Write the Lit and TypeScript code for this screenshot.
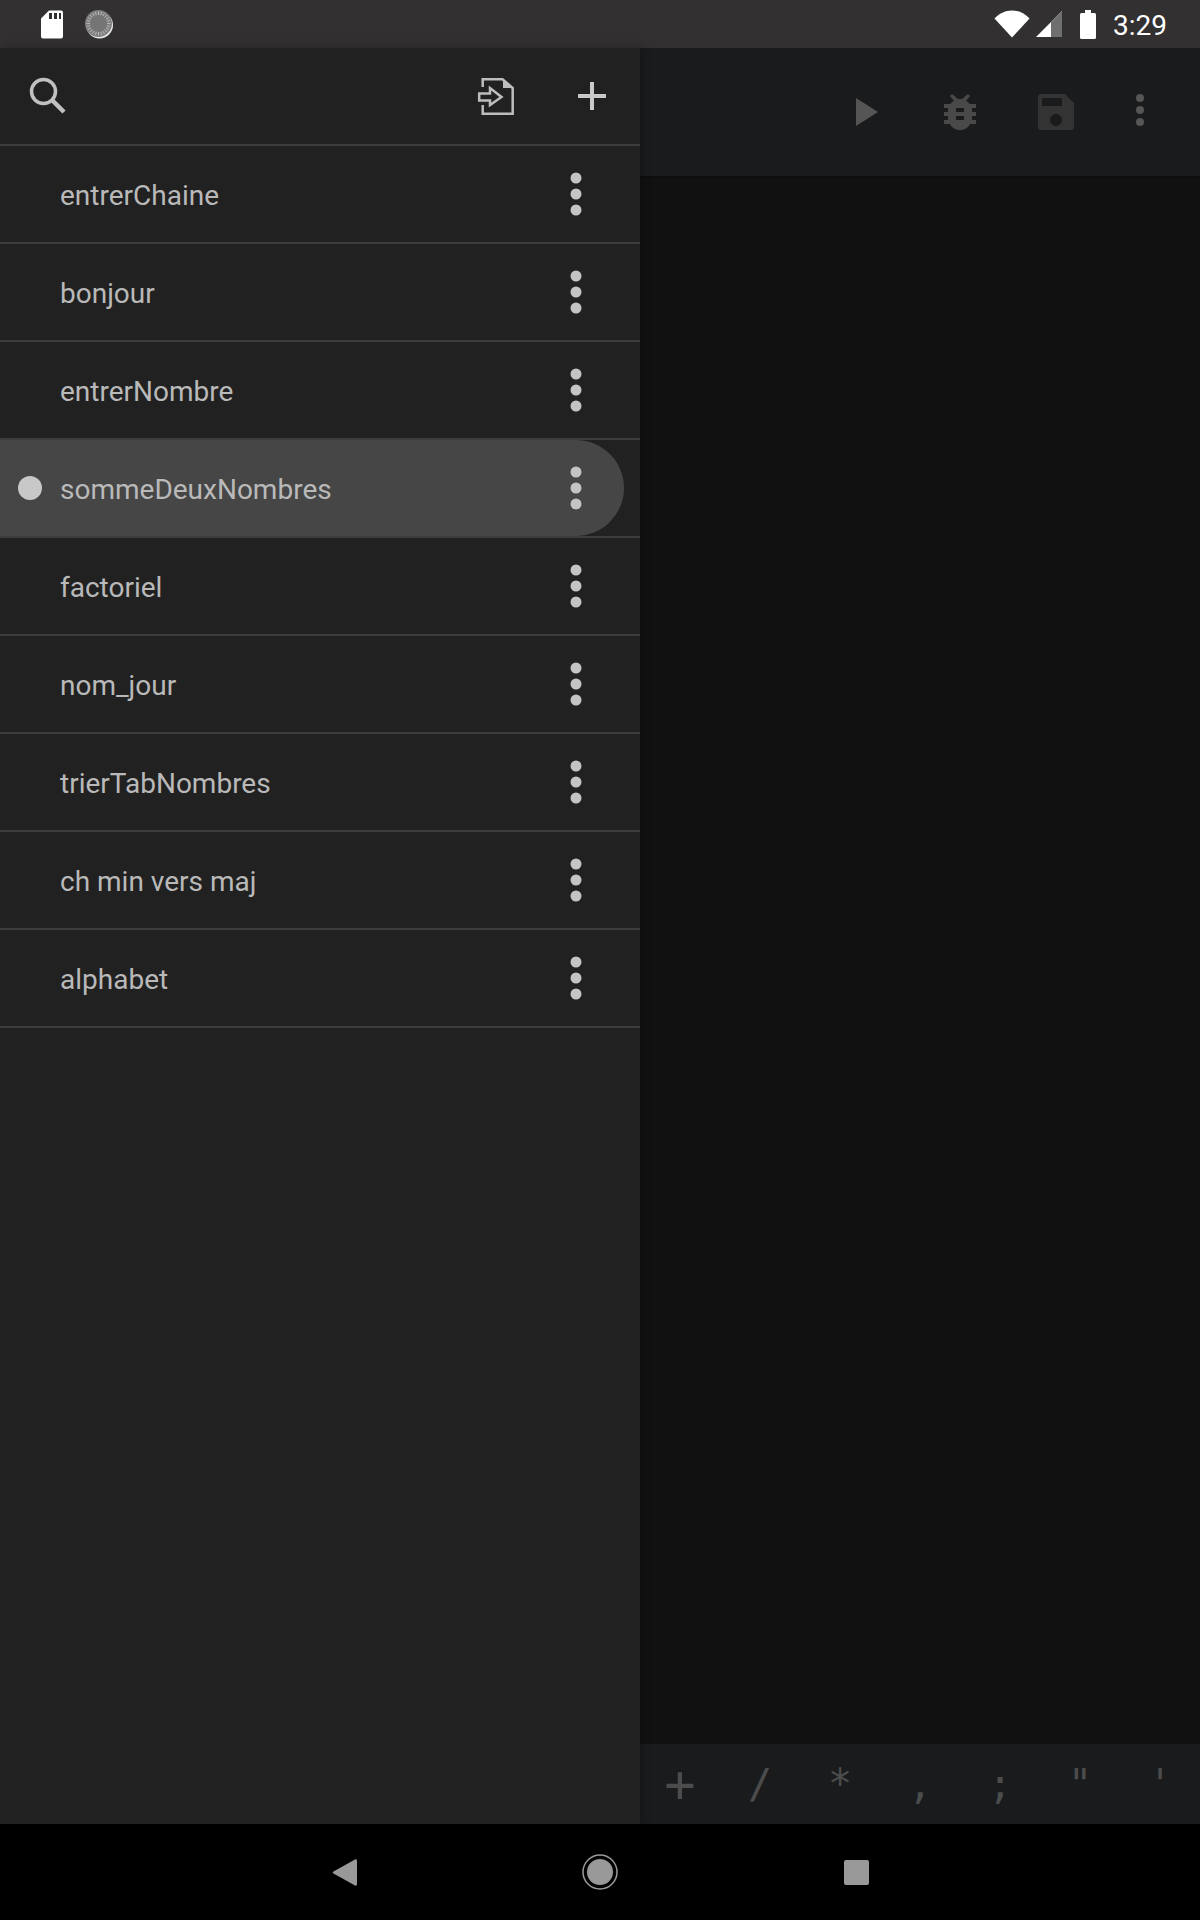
import { LitElement, html, css, svg } from "lit";
import { customElement } from "lit/decorators.js";

const NAMES = ["entrerChaine","bonjour","entrerNombre","sommeDeuxNombres","factoriel","nom_jour","trierTabNombres","ch min vers maj","alphabet"];
const KEYS = ["+","/","*",",",";","\"","'"];

const kebab = html`<svg class="kebab" width="12" height="44" viewBox="0 0 12 44"><circle cx="6" cy="6" r="5.5"/><circle cx="6" cy="22" r="5.5"/><circle cx="6" cy="38" r="5.5"/></svg>`;

const ticks = Array.from({ length: 24 }, (_, i) => {
  const a = (i * Math.PI) / 12;
  return svg`<line x1=${13.5 + Math.cos(a) * 8.5} y1=${13.5 + Math.sin(a) * 8.5} x2=${13.5 + Math.cos(a) * 12} y2=${13.5 + Math.sin(a) * 12} stroke="#b4b4b4" stroke-width="1"/>`;
});

@customElement("app-root")
export class AppRoot extends LitElement {
  static styles = css`
    :host { display: flex; flex-direction: column; width: 1200px; height: 1920px; font-family: Roboto, sans-serif; background: #000; overflow: hidden; }
    .status { height: 48px; flex: none; background: #323031; display: flex; align-items: center; padding: 0 33px 0 40px; box-sizing: border-box; }
    .status .sp { flex: 1; }
    .status svg { display: block; flex: none; }
    .spin { margin-left: 21px; }
    .sig { margin-left: 6px; }
    .bat { margin-left: 18px; }
    .time { color: #fff; font-size: 28px; margin: 3px 0 0 17px; line-height: 45px; }
    .body { flex: 1; display: flex; min-height: 0; }
    .drawer { width: 640px; flex: none; background: #212121; display: flex; flex-direction: column; position: relative; z-index: 1; box-shadow: 2px 0 10px rgba(0,0,0,.25); }
    .dbar { height: 96px; flex: none; display: flex; align-items: center; padding: 0 34px 0 28px; box-sizing: border-box; }
    .dbar .sp { flex: 1; }
    .dbar svg { display: block; flex: none; }
    .imp { margin-right: 64px; }
    .row { height: 98px; box-sizing: border-box; border-top: 2px solid #3d3d3d; display: flex; align-items: center; position: relative; }
    .row.last { height: 100px; border-bottom: 2px solid #3d3d3d; }
    .row .hl { position: absolute; left: 0; top: 0; right: 16px; bottom: 0; background: #464646; border-radius: 0 48px 48px 0; }
    .row .dot { position: absolute; left: 18px; top: 36px; width: 24px; height: 24px; border-radius: 50%; background: #c8c8c8; }
    .name { position: relative; flex: 1; padding: 4px 0 0 60px; font-size: 28px; color: #b9b9b9; line-height: 92px; }
    .kebab { position: relative; display: block; margin-right: 58px; fill: #c4c4c4; }
    .main { flex: 1; background: #111111; display: flex; flex-direction: column; }
    .mbar { height: 128px; flex: none; background: #1a1b1d; position: relative; display: flex; align-items: flex-start; padding-top: 46px; box-sizing: border-box; box-shadow: 0 1px 2px rgba(0,0,0,.3); }
    .mbar svg { display: block; flex: none; }
    .m-play { margin-left: 216px; margin-top: 4px; }
    .m-bug { margin-left: 66px; }
    .m-save { margin-left: 62px; }
    .m-keb { margin-left: 62px; }
    .fill { flex: 1; }
    .keys { height: 80px; flex: none; background: #1a1b1d; display: flex; }
    .key { width: 80px; text-align: center; color: #4c4c4c; font-size: 40px; line-height: 80px; font-family: "DejaVu Sans Mono", monospace; }
    .key.big { font-size: 52px; }
    .nav { height: 96px; flex: none; background: #000; display: flex; justify-content: center; align-items: center; }
    .nav svg { display: block; }
  `;

  render() {
    return html`
      <div class="status">
        <svg width="24" height="29" viewBox="0 0 24 29"><path fill="#fff" fill-rule="evenodd" d="M9 .5h12a2 2 0 0 1 2 2v24a2 2 0 0 1-2 2H3a2 2 0 0 1-2-2V8.500zM9 3v6h3V3zM14 3v6h3V3zM19 3v6h2V3z"/></svg>
        <svg class="spin" width="29" height="29" viewBox="0 0 29 29"><circle cx="14.500" cy="15" r="13.500" fill="#e8e8e8"/><circle cx="13.500" cy="13.500" r="13.500" fill="#808080"/><circle cx="13.500" cy="13.500" r="9" fill="#757575"/>${ticks}</svg>
        <div class="sp"></div>
        <svg width="36" height="28" viewBox="0 0 36 28"><path fill="#fff" d="M18 27.500 .5 8.500C5 3.500 11 .5 18 .5s13 3 17.500 8z"/></svg>
        <svg class="sig" width="26" height="26" viewBox="0 0 26 26"><path fill="#fff" d="M0 26 26 0v26z"/><path fill="#6f6f6f" d="M15 11 26 0v26H15z"/></svg>
        <svg class="bat" width="16" height="29" viewBox="0 0 16 29"><path fill="#fff" d="M5 0h6v3h3.500a1.500 1.500 0 0 1 1.500 1.500V27.500a1.500 1.500 0 0 1-1.500 1.500h-13A1.500 1.500 0 0 1 0 27.500V4.500A1.500 1.500 0 0 1 1.500 3H5z"/></svg>
        <span class="time">3:29</span>
      </div>
      <div class="body">
        <div class="drawer">
          <div class="dbar">
            <svg width="38" height="38" viewBox="0 0 38 38" fill="none" stroke="#c0c0c0"><circle cx="15.500" cy="14.500" r="12" stroke-width="3.500"/><path stroke-width="4.500" d="M24 23l12 12"/></svg>
            <div class="sp"></div>
            <svg class="imp" width="38" height="38" viewBox="0 0 38 38" fill="none" stroke="#bdbdbd" stroke-width="2.500"><path d="M6.700 10V2.300H26.500L36.700 11V36.700H6.700V28"/><path fill="#bdbdbd" stroke="none" d="M27 2l10 9H27z"/><path d="M3.200 16.500H14V11L25.500 20 14 28V23.500H3.200z"/></svg>
            <svg width="28" height="28" viewBox="0 0 28 28"><path fill="#c8c8c8" d="M12 0h4v12h12v4H16v12h-4V16H0v-4h12z"/></svg>
          </div>
          ${NAMES.map((n, i) => html`
            <div class="row ${i === NAMES.length - 1 ? "last" : ""}">
              ${i === 3 ? html`<div class="hl"></div><div class="dot"></div>` : ""}
              <div class="name">${n}</div>
              ${kebab}
            </div>`)}
        </div>
        <div class="main">
          <div class="mbar">
            <svg class="m-play" width="22" height="28" viewBox="0 0 22 28"><path fill="#555" d="M0 0l22 14L0 28z"/></svg>
            <svg class="m-bug" width="32" height="36" viewBox="0 0 32 36"><path fill="#494949" fill-rule="evenodd" d="M6 2l2-2 6 5h4l6-5 2 2-4 5c2 1 3 2 4 3h6v4h-4v4h4v4h-4v4h4v4h-6c-2 4-6 6-10 6s-8-2-10-6H0v-4h4v-4H0v-4h4v-4H0v-4h6c1-1 2-2 4-3zM12 14v4h8v-4zM12 22v4h8v-4z"/></svg>
            <svg class="m-save" width="36" height="36" viewBox="0 0 36 36"><path fill="#333" fill-rule="evenodd" d="M3 0h24l9 9v24a3 3 0 0 1-3 3H3a3 3 0 0 1-3-3V3a3 3 0 0 1 3-3zM4 4v8h20V4zM18 20a6 6 0 1 0 0 12 6 6 0 0 0 0-12z"/></svg>
            <svg class="m-keb" width="8" height="32" viewBox="0 0 8 32"><g fill="#555"><circle cx="4" cy="4" r="4"/><circle cx="4" cy="16" r="4"/><circle cx="4" cy="28" r="4"/></g></svg>
          </div>
          <div class="fill"></div>
          <div class="keys">${KEYS.map((k) => html`<div class="key ${k === "+" ? "big" : ""}">${k}</div>`)}</div>
        </div>
      </div>
      <div class="nav">
        <svg width="560" height="40" viewBox="0 -4 560 40"><g fill="#999"><path d="M35 3.500c1-.5 2 0 2 1.500v23c0 1.500-1 2-2 1.500L13.500 17.500c-1-.6-1-1.400 0-2z"/><circle cx="280" cy="16" r="13"/><rect x="524" y="4" width="25" height="25" rx="2"/></g><circle cx="280" cy="16" r="17" fill="none" stroke="#999" stroke-width="1.500"/></svg>
      </div>
    `;
  }
}
